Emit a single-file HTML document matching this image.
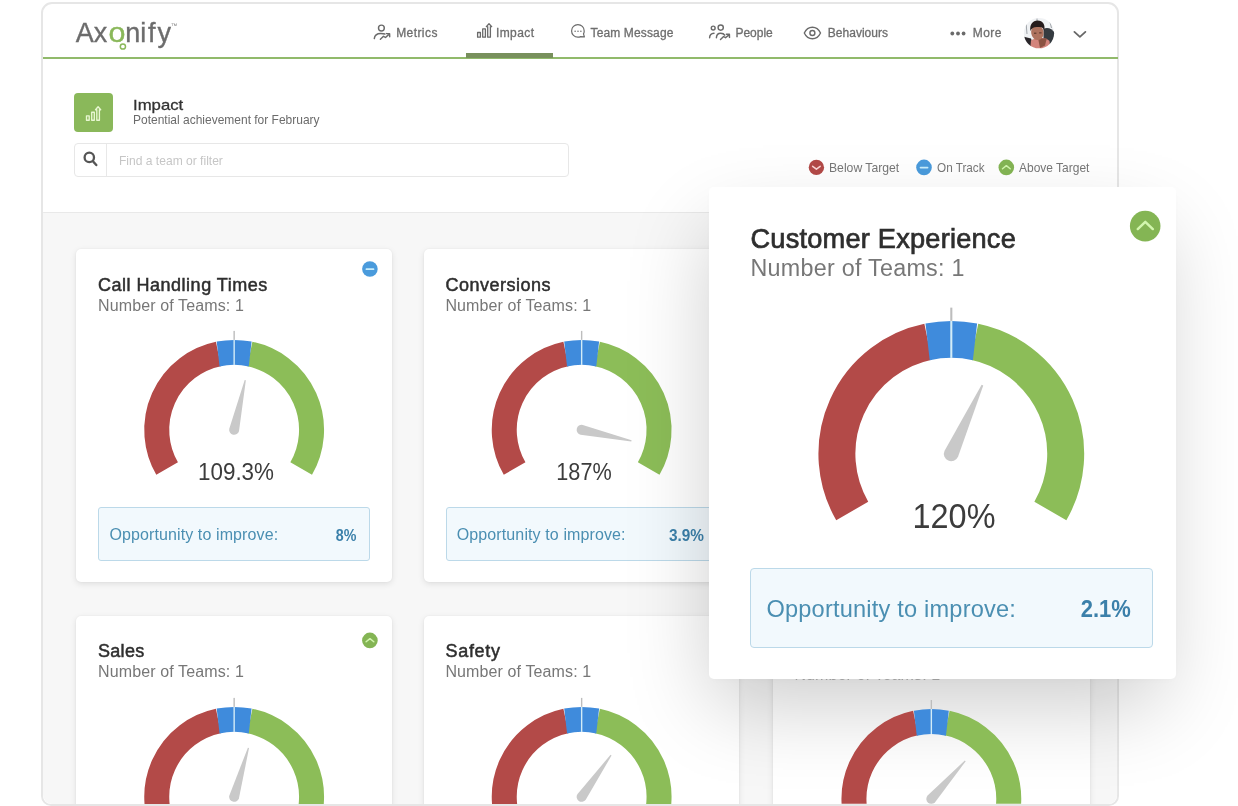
<!DOCTYPE html>
<html lang="en"><head><meta charset="utf-8"><title>Axonify Impact</title>
<style>
html,body{margin:0;padding:0;background:#fff}
body{width:1238px;height:806px;position:relative;overflow:hidden;font-family:"Liberation Sans",Arial,sans-serif}
.t{position:absolute;white-space:nowrap;line-height:1;}
.frame{position:absolute;left:41.1px;top:2.3px;width:1074px;height:799.6px;border:2px solid #e6e6e6;border-radius:11px 11px 10px 10px;background:#fff;overflow:hidden;box-sizing:content-box}
.body{position:absolute;left:0;top:212.3px;width:1238px;height:600px;background:#f7f7f7;border-top:1px solid #e9e9e9}
.greenline{position:absolute;left:43px;top:57.2px;width:1075px;height:2.2px;background:#91ba6b}
.tab{position:absolute;left:465.7px;top:53.3px;width:87.2px;height:4.8px;background:#78905c}
.tile{position:absolute;left:73.8px;top:92.6px;width:39px;height:39px;border-radius:4px;background:#8ab85a}
.search{position:absolute;left:73.6px;top:143.3px;width:493px;height:31.6px;border:1px solid #e7e7e7;border-radius:4px;background:#fff}
.search i{position:absolute;left:31.7px;top:0;width:1px;height:100%;background:#e8e8e8}
.card{position:absolute;background:#fff;border-radius:5px;box-shadow:0 2px 6px rgba(0,0,0,.10),0 0 2px rgba(0,0,0,.05)}
.opp{position:absolute;background:#f2f9fd;border:1px solid #bcd9e9;border-radius:3px;box-sizing:border-box}
.popup{position:absolute;left:709.3px;top:186.9px;width:467px;height:491.9px;background:#fff;border-radius:5px;box-shadow:-6px 34px 80px -8px rgba(0,0,0,.20),0 2px 8px rgba(0,0,0,.025)}
.layer{position:absolute;left:0;top:0;width:1238px;height:806px}
svg.layer{overflow:visible}
</style></head><body><div id="root" style="position:absolute;left:0;top:0;width:1238px;height:806px;will-change:transform">
<div class="frame"></div>
<div class="layer" style="clip-path:inset(4.3px 120.9px 2.1px 43.1px round 9px)">
<div class="body"></div>
<div class="card" style="left:76.2px;top:249.1px;width:315.5px;height:333px"></div>
<div class="opp" style="left:98.1px;top:507.3px;width:272px;height:53.4px"></div>
<div class="card" style="left:423.6px;top:249.1px;width:315.7px;height:333px"></div>
<div class="opp" style="left:445.5px;top:507.3px;width:272px;height:53.4px"></div>
<div class="card" style="left:76.2px;top:616.1px;width:315.5px;height:333px"></div>
<div class="card" style="left:423.6px;top:616.1px;width:315.7px;height:333px"></div>
<div class="card" style="left:772.6px;top:616.1px;width:317.1px;height:333px"></div>
<svg class="layer" viewBox="0 0 1238 806">
<path d="M167.12 468.50A77.40 77.40 0 0 1 218.45 354.01" fill="none" stroke="#b34a48" stroke-width="25.00"/>
<path d="M249.85 354.01A77.40 77.40 0 0 1 301.18 468.50" fill="none" stroke="#8cbd58" stroke-width="25.00"/>
<path d="M216.69 341.61A89.90 89.90 0 0 1 251.61 341.61L248.75 366.56A64.90 64.90 0 0 0 219.55 366.56Z" fill="#3f8bdc"/>
<rect x="233.45" y="330.90" width="1.40" height="9.00" fill="#bdbdbd"/>
<rect x="233.45" y="339.90" width="1.40" height="25.00" fill="#d3ecf7"/>
<g transform="translate(234.15 429.80) rotate(12.6)"><path d="M-5.00 0A5.00 5.00 0 0 0 5.00 0L0.60 -51.00L-0.60 -51.00Z" fill="#c9c9c9"/></g>
<circle cx="369.90" cy="269.00" r="7.80" fill="#4a9bdc"/><path d="M366.40 269.20H373.50" stroke="#c9eefb" stroke-width="1.70" stroke-linecap="round" fill="none"/>
<path d="M514.62 468.50A77.40 77.40 0 0 1 565.95 354.01" fill="none" stroke="#b34a48" stroke-width="25.00"/>
<path d="M597.35 354.01A77.40 77.40 0 0 1 648.68 468.50" fill="none" stroke="#8cbd58" stroke-width="25.00"/>
<path d="M564.19 341.61A89.90 89.90 0 0 1 599.11 341.61L596.25 366.56A64.90 64.90 0 0 0 567.05 366.56Z" fill="#3f8bdc"/>
<rect x="580.95" y="330.90" width="1.40" height="9.00" fill="#bdbdbd"/>
<rect x="580.95" y="339.90" width="1.40" height="25.00" fill="#d3ecf7"/>
<g transform="translate(581.65 429.80) rotate(102.5)"><path d="M-5.00 0A5.00 5.00 0 0 0 5.00 0L0.60 -51.00L-0.60 -51.00Z" fill="#c9c9c9"/></g>
<path d="M167.12 835.50A77.40 77.40 0 0 1 218.45 721.01" fill="none" stroke="#b34a48" stroke-width="25.00"/>
<path d="M249.85 721.01A77.40 77.40 0 0 1 301.18 835.50" fill="none" stroke="#8cbd58" stroke-width="25.00"/>
<path d="M216.69 708.61A89.90 89.90 0 0 1 251.61 708.61L248.75 733.56A64.90 64.90 0 0 0 219.55 733.56Z" fill="#3f8bdc"/>
<rect x="233.45" y="697.90" width="1.40" height="9.00" fill="#bdbdbd"/>
<rect x="233.45" y="706.90" width="1.40" height="25.00" fill="#d3ecf7"/>
<g transform="translate(234.15 796.80) rotate(16.3)"><path d="M-5.00 0A5.00 5.00 0 0 0 5.00 0L0.60 -51.00L-0.60 -51.00Z" fill="#c9c9c9"/></g>
<circle cx="369.90" cy="640.40" r="7.80" fill="#84b554"/><path d="M366.10 641.75L369.95 638.70L373.80 641.75" stroke="#d2f6ae" stroke-width="1.50" stroke-linecap="round" stroke-linejoin="round" fill="none"/>
<path d="M514.62 835.50A77.40 77.40 0 0 1 565.95 721.01" fill="none" stroke="#b34a48" stroke-width="25.00"/>
<path d="M597.35 721.01A77.40 77.40 0 0 1 648.68 835.50" fill="none" stroke="#8cbd58" stroke-width="25.00"/>
<path d="M564.19 708.61A89.90 89.90 0 0 1 599.11 708.61L596.25 733.56A64.90 64.90 0 0 0 567.05 733.56Z" fill="#3f8bdc"/>
<rect x="580.95" y="697.90" width="1.40" height="9.00" fill="#bdbdbd"/>
<rect x="580.95" y="706.90" width="1.40" height="25.00" fill="#d3ecf7"/>
<g transform="translate(581.65 796.80) rotate(35.2)"><path d="M-5.00 0A5.00 5.00 0 0 0 5.00 0L0.60 -51.00L-0.60 -51.00Z" fill="#c9c9c9"/></g>
</svg>
<span class="t" id="c1t" style="top:275.86px;font-size:18px;color:#2e2e2e;-webkit-text-stroke:0.5px #2e2e2e;letter-spacing:0.507px;left:98.00px;">Call Handling Times</span>
<span class="t" id="c1s" style="top:297.86px;font-size:16px;color:#777;letter-spacing:0.120px;left:98.00px;">Number of Teams: 1</span>
<span class="t" id="c1v" style="top:460.01px;font-size:24.2px;color:#3c3c3c;left:236.35px;transform:translateX(-50%) scale(0.9263,1);transform-origin:50% 84.65%;">109.3%</span>
<span class="t" id="c1o" style="top:527.46px;font-size:16px;color:#4b8fb2;letter-spacing:0.109px;left:109.40px;">Opportunity to improve:</span>
<span class="t" id="c1p" style="top:526.79px;font-size:16.2px;color:#3b80aa;font-weight:bold;right:882.00px;transform:scale(0.8801,1);transform-origin:100% 84.65%;">8%</span>
<span class="t" id="c2t" style="top:275.86px;font-size:18px;color:#2e2e2e;-webkit-text-stroke:0.5px #2e2e2e;letter-spacing:0.495px;left:445.40px;">Conversions</span>
<span class="t" id="c2s" style="top:297.86px;font-size:16px;color:#777;letter-spacing:0.120px;left:445.40px;">Number of Teams: 1</span>
<span class="t" id="c2v" style="top:460.01px;font-size:24.2px;color:#3c3c3c;left:583.85px;transform:translateX(-50%) scale(0.8954,1);transform-origin:50% 84.65%;">187%</span>
<span class="t" id="c2o" style="top:527.46px;font-size:16px;color:#4b8fb2;letter-spacing:0.109px;left:456.80px;">Opportunity to improve:</span>
<span class="t" id="c2p" style="top:526.79px;font-size:16.2px;color:#3b80aa;font-weight:bold;right:534.60px;transform:scale(0.9483,1);transform-origin:100% 84.65%;">3.9%</span>
<span class="t" id="c4t" style="top:642.06px;font-size:18px;color:#2e2e2e;-webkit-text-stroke:0.5px #2e2e2e;letter-spacing:0.292px;left:98.00px;">Sales</span>
<span class="t" id="c4s" style="top:664.06px;font-size:16px;color:#777;letter-spacing:0.120px;left:98.00px;">Number of Teams: 1</span>
<span class="t" id="c5t" style="top:642.06px;font-size:18px;color:#2e2e2e;-webkit-text-stroke:0.5px #2e2e2e;letter-spacing:0.734px;left:445.40px;">Safety</span>
<span class="t" id="c5s" style="top:664.06px;font-size:16px;color:#777;letter-spacing:0.120px;left:445.40px;">Number of Teams: 1</span>
<span class="t" id="c6s" style="top:666.56px;font-size:16px;color:#777;letter-spacing:0.120px;left:794.40px;clip-path:inset(0 0 2.9px 0);color:#a2a2a2;">Number of Teams: 1</span>
</div>
<div class="greenline"></div><div class="tab"></div>
<div class="tile"></div>
<div class="search"><i></i></div>
<svg class="layer" viewBox="0 0 1238 806">
<!-- logo o ring + tail circle -->
<g fill="none" stroke="#8ab85a">
<circle cx="122.9" cy="46.5" r="2.6" stroke-width="1.5"/>
</g>
<g font-size="27" font-family="Liberation Sans,Arial,sans-serif" stroke-width=".35"><text x="75.8 93.8" y="42.2" fill="#6c6c6c" stroke="#6c6c6c">Ax</text><text transform="translate(108.5 42.2) scale(1.13 1)" fill="#8ab85a" stroke="#8ab85a">o</text><text x="125.2 140.3 147.9 157.4" y="42.2" fill="#6c6c6c" stroke="#6c6c6c">nify</text></g>
<!-- nav icons -->
<g fill="none" stroke="#6a6a6a" stroke-width="1.45" stroke-linecap="round" stroke-linejoin="round">
<!-- metrics -->
<circle cx="381.4" cy="28" r="2.9"/>
<path d="M374.3 38.6C374.6 35.2 377.2 33.4 380.8 33.4C382.4 33.4 383.8 33.6 384.9 34"/>
<path d="M380.4 39.2L383.5 36.3L385.5 37.5L389.4 33.9M386.6 33.6L389.6 33.7L389.7 36.8"/>
<!-- impact -->
<path d="M477.6 32.5H480.4V37.2H477.6ZM482.7 28.9H485.4V37.2H482.7ZM487.7 37.2V26.6H486.3L489 23.7L491.7 26.6H490.4V37.2Z" stroke-width="1.3"/>
<!-- team message -->
<path d="M584.4 36.9L580.6 36.6C579.8 37 578.9 37.2 577.9 37.2A6.3 6.3 0 1 1 584.2 30.9C584.2 32 584 33 583.5 33.9Z" stroke-width="1.2"/>
<!-- people -->
<circle cx="713.2" cy="28" r="1.9"/>
<circle cx="720.7" cy="27.6" r="2.6"/>
<path d="M709.6 37.8C709.7 35 711.2 33.3 714 33.2"/>
<path d="M716.4 37.8C716.5 34.8 718 33.2 720.7 33.2C722.6 33.2 724 33.9 724.7 35.2"/>
<path d="M720.5 39.5L723.6 36.5L725.5 37.7L729.2 34.6M726.4 34.2L729.4 34.3L729.5 37.4"/>
<!-- eye -->
<path d="M804.3 33C806 29.4 808.9 27.2 812.4 27.2C815.9 27.2 818.8 29.4 820.5 33C818.8 36.6 815.9 38.8 812.4 38.8C808.9 38.8 806 36.6 804.3 33Z" stroke-width="1.4"/>
<circle cx="812.4" cy="33" r="2.5" stroke-width="1.4"/>
<!-- chevron -->
<path d="M1074.4 31.9L1079.9 36.8L1085.4 31.9" stroke-width="1.8" stroke="#666"/>
</g>
<g fill="#6a6a6a">
<circle cx="575.1" cy="31.2" r=".75"/><circle cx="578" cy="31.2" r=".75"/><circle cx="580.9" cy="31.2" r=".75"/>
<circle cx="952.3" cy="33.5" r="1.9"/><circle cx="958" cy="33.5" r="1.9"/><circle cx="963.6" cy="33.5" r="1.9"/>
</g>
<!-- avatar -->
<defs><clipPath id="av"><circle cx="1039" cy="33.2" r="15.1"/></clipPath>
<filter id="avb" x="-20%" y="-20%" width="140%" height="140%"><feGaussianBlur stdDeviation="0.5"/></filter></defs>
<g clip-path="url(#av)"><g filter="url(#avb)">
<rect x="1020" y="14" width="40" height="40" fill="#f0f2f4"/>
<path d="M1026 22L1027 34M1050 22L1051.5 28M1037 18.5V21" stroke="#8a8f96" stroke-width=".8" fill="none"/>
<path d="M1043.5 29C1047 26.5 1052 28.5 1055 33V47H1043.5Z" fill="#363a41"/>
<path d="M1023 36.5L1031 38.5L1035 51H1023Z" fill="#2b282b"/>
<path d="M1031 40.5C1034 37.5 1046.5 36.5 1049.5 41L1050.5 51H1030Z" fill="#d3847b"/>
<path d="M1038 38L1046.8 38.5L1045 45.5L1040 48Z" fill="#8c5243"/>
<ellipse cx="1037.4" cy="32.6" rx="6.2" ry="7.4" fill="#ae735e" transform="rotate(-8 1037.4 32.6)"/>
<path d="M1030.4 31C1029.4 24.6 1032.6 20.4 1037.6 20.4C1043 20.4 1045.6 24.8 1044.2 31C1043.6 28 1042 26.6 1038 27C1034 26.6 1031.8 28 1030.4 31Z" fill="#281d1d"/>
<path d="M1034 33.2H1036.4M1039.2 32.9H1041.6" stroke="#4e3028" stroke-width="1" fill="none"/>
</g></g>
<!-- tile icon -->
<g fill="none" stroke="#e8f7d2" stroke-width="1.35" stroke-linejoin="round">
<path d="M86.5 115.8H89.2V120.2H86.5ZM91.7 112.2H94.3V120.2H91.7ZM96.8 120.2V109.7H95.5L98.1 106.8L100.7 109.7H99.4V120.2Z"/>
</g>
<!-- search icon -->
<g fill="none" stroke="#555" stroke-linecap="round">
<circle cx="89.3" cy="157.4" r="4.7" stroke-width="2.3"/>
<path d="M92.9 161.2L96.3 165" stroke-width="2.4"/>
</g>

<circle cx="816.40" cy="167.40" r="7.70" fill="#b34a48"/><path d="M812.65 166.31L816.40 169.08L820.15 166.31" stroke="#fbd5d5" stroke-width="1.58" stroke-linecap="round" stroke-linejoin="round" fill="none"/><circle cx="924.00" cy="167.40" r="7.80" fill="#4a9bdc"/><path d="M920.50 167.60H927.60" stroke="#c9eefb" stroke-width="1.70" stroke-linecap="round" fill="none"/><circle cx="1006.30" cy="167.40" r="7.80" fill="#84b554"/><path d="M1002.50 168.75L1006.35 165.70L1010.20 168.75" stroke="#d2f6ae" stroke-width="1.50" stroke-linecap="round" stroke-linejoin="round" fill="none"/>
</svg>
<span class="t" id="lg2" style="top:23.10px;font-size:6.5px;color:#8a8a8a;left:170.80px;">™</span>
<span class="t" id="nav1" style="top:26.74px;font-size:12px;color:#6e6e6e;-webkit-text-stroke:0.3px #6e6e6e;letter-spacing:0.421px;left:396.20px;">Metrics</span>
<span class="t" id="nav2" style="top:26.74px;font-size:12px;color:#6e6e6e;-webkit-text-stroke:0.3px #6e6e6e;letter-spacing:0.397px;left:496.00px;">Impact</span>
<span class="t" id="nav3" style="top:26.74px;font-size:12px;color:#6e6e6e;-webkit-text-stroke:0.3px #6e6e6e;letter-spacing:0.139px;left:590.50px;">Team Message</span>
<span class="t" id="nav4" style="top:26.74px;font-size:12px;color:#6e6e6e;-webkit-text-stroke:0.3px #6e6e6e;letter-spacing:0.005px;left:735.40px;">People</span>
<span class="t" id="nav5" style="top:26.74px;font-size:12px;color:#6e6e6e;-webkit-text-stroke:0.3px #6e6e6e;letter-spacing:0.017px;left:827.80px;">Behaviours</span>
<span class="t" id="nav6" style="top:26.74px;font-size:12px;color:#6e6e6e;-webkit-text-stroke:0.3px #6e6e6e;letter-spacing:0.419px;left:972.80px;">More</span>
<span class="t" id="h1" style="top:97.00px;font-size:15px;color:#333;-webkit-text-stroke:0.3px #333;left:133.10px;transform:scale(1.1152,1);transform-origin:0 84.65%;">Impact</span>
<span class="t" id="h2" style="top:114.07px;font-size:12.2px;color:#6b6b6b;left:133.10px;transform:scale(0.9837,1);transform-origin:0 84.65%;">Potential achievement for February</span>
<span class="t" id="ph" style="top:154.70px;font-size:12.4px;color:#c6c6c6;left:119.30px;transform:scale(0.9733,1);transform-origin:0 84.65%;">Find a team or filter</span>
<span class="t" id="l1" style="top:161.50px;font-size:12.4px;color:#777;left:829.00px;transform:scale(0.9831,1);transform-origin:0 84.65%;">Below Target</span>
<span class="t" id="l2" style="top:161.50px;font-size:12.4px;color:#777;left:936.70px;transform:scale(0.9470,1);transform-origin:0 84.65%;">On Track</span>
<span class="t" id="l3" style="top:161.50px;font-size:12.4px;color:#777;left:1019.40px;transform:scale(0.9671,1);transform-origin:0 84.65%;">Above Target</span>
<div class="popup"></div>
<div class="opp" style="left:749.5px;top:567.7px;width:403.2px;height:80px;border-width:1.5px;border-radius:4px"></div>
<svg class="layer" viewBox="0 0 1238 806">
<path d="M852.23 511.00A114.40 114.40 0 0 1 928.10 341.78" fill="none" stroke="#b34a48" stroke-width="36.95"/>
<path d="M974.50 341.78A114.40 114.40 0 0 1 1050.37 511.00" fill="none" stroke="#8cbd58" stroke-width="36.95"/>
<path d="M925.49 323.46A132.87 132.87 0 0 1 977.11 323.46L972.88 360.34A95.92 95.92 0 0 0 929.72 360.34Z" fill="#3f8bdc"/>
<rect x="950.27" y="307.63" width="2.07" height="13.30" fill="#bdbdbd"/>
<rect x="950.27" y="320.93" width="2.07" height="36.95" fill="#d3ecf7"/>
<g transform="translate(951.30 453.80) rotate(24.4)"><path d="M-7.39 0A7.39 7.39 0 0 0 7.39 0L0.89 -75.38L-0.89 -75.38Z" fill="#c9c9c9"/></g><circle cx="1145.20" cy="226.10" r="15.30" fill="#84b554"/><path d="M1137.75 229.04L1145.30 221.78L1152.85 229.04" stroke="#d2f6ae" stroke-width="2.45" stroke-linecap="round" stroke-linejoin="round" fill="none"/>
<g clip-path="url(#fc)"><path d="M864.32 837.60A77.40 77.40 0 0 1 915.65 723.11" fill="none" stroke="#b34a48" stroke-width="25.00"/>
<path d="M947.05 723.11A77.40 77.40 0 0 1 998.38 837.60" fill="none" stroke="#8cbd58" stroke-width="25.00"/>
<path d="M913.89 710.71A89.90 89.90 0 0 1 948.81 710.71L945.95 735.66A64.90 64.90 0 0 0 916.75 735.66Z" fill="#3f8bdc"/>
<rect x="930.65" y="700.00" width="1.40" height="9.00" fill="#bdbdbd"/>
<rect x="930.65" y="709.00" width="1.40" height="25.00" fill="#d3ecf7"/>
<g transform="translate(931.35 798.90) rotate(41.7)"><path d="M-5.00 0A5.00 5.00 0 0 0 5.00 0L0.60 -51.00L-0.60 -51.00Z" fill="#c9c9c9"/></g></g>
<defs><clipPath id="fc"><rect x="43" y="4" width="1074" height="799.8" rx="9"/></clipPath></defs>
</svg>
<span class="t" id="pt" style="top:225.08px;font-size:27.2px;color:#2e2e2e;-webkit-text-stroke:0.7px #2e2e2e;letter-spacing:0.215px;left:750.50px;">Customer Experience</span>
<span class="t" id="ps" style="top:256.88px;font-size:23.3px;color:#777;letter-spacing:0.274px;left:750.50px;">Number of Teams: 1</span>
<span class="t" id="pv" style="top:498.50px;font-size:35.8px;color:#3c3c3c;left:954.30px;transform:translateX(-50%) scale(0.9054,1);transform-origin:50% 84.65%;">120%</span>
<span class="t" id="po" style="top:597.62px;font-size:23.6px;color:#4b8fb2;letter-spacing:0.194px;left:766.40px;">Opportunity to improve:</span>
<span class="t" id="pp" style="top:597.96px;font-size:23.2px;color:#3b80aa;font-weight:bold;right:106.70px;transform:scale(0.9478,1);transform-origin:100% 84.65%;">2.1%</span>
</div></body></html>
